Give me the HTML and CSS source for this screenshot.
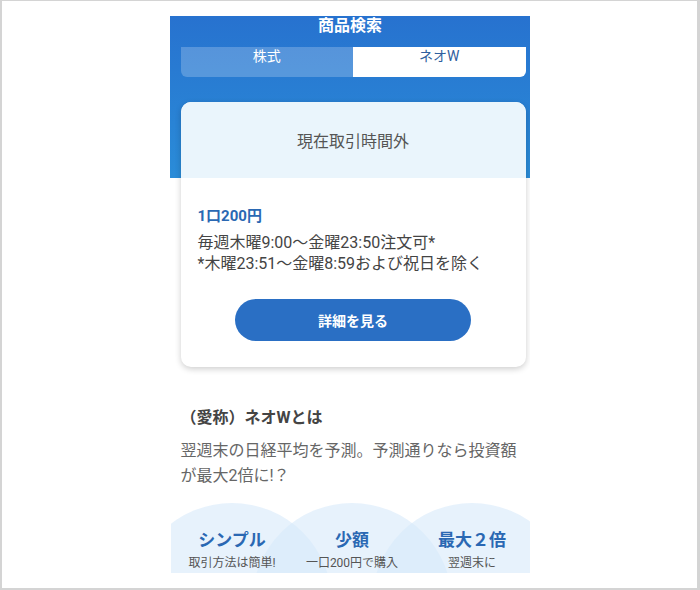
FILE: index.html
```html
<!DOCTYPE html>
<html lang="ja">
<head>
  <meta charset="UTF-8" />
  <title>商品検索 ネオW</title>
  <meta name="viewport" content="width=device-width,initial-scale=1" />
  <link rel="stylesheet" href="styles.css">
</head>
<body>
  <div class="frame">
    <div class="screen">
      <h1 class="title">商品検索</h1>
      <div class="tabs">
        <div class="tab">株式</div>
        <div class="tab active">ネオW</div>
      </div>

      <div class="card">
        <div class="card-status">現在取引時間外</div>
        <div class="card-body">
          <div class="price">1口200円</div>
          <p class="hours">毎週木曜9:00～金曜23:50注文可*<br>*木曜23:51～金曜8:59および祝日を除く</p>
          <button type="button" class="detail-btn">詳細を見る</button>
        </div>
      </div>

      <h2 class="about-title">（愛称）ネオWとは</h2>
      <p class="about-text">翌週末の日経平均を予測。予測通りなら投資額が最大2倍に!？</p>

      <div class="features">
        <div class="feature">
          <div class="feature-name">シンプル</div>
          <div class="feature-desc">取引方法は簡単!</div>
        </div>
        <div class="feature">
          <div class="feature-name">少額</div>
          <div class="feature-desc">一口200円で購入</div>
        </div>
        <div class="feature">
          <div class="feature-name">最大２倍</div>
          <div class="feature-desc">翌週末に</div>
        </div>
      </div>
    </div>
  </div>
</body>
</html>
```

FILE: styles.css
```css
:root {
  --blue: #2a6fc4;
  --blue-text: #2a68b3;
  --text: #444;
  --muted: #666;
}
body {
  margin: 0;
  background: #fff;
  font-family: Roboto, "Noto Sans CJK JP", sans-serif;
}
.frame {
  width: 700px;
  height: 590px;
  box-sizing: border-box;
  border: 2px solid #d4d4d4;
  border-top-width: 1px;
  border-right-width: 3px;
  overflow: hidden;
}
.screen {
  width: 360px;
  height: 557px;
  margin: 15px auto 0 auto;
  padding-left: 1px;
  box-sizing: border-box;
  overflow: hidden;
  background: linear-gradient(180deg, #2772cf 0%, #2a8cd8 100%) top left / 100% 162px no-repeat;
}
.title {
  margin: 0;
  color: #fff;
  font-size: 16px;
  font-weight: 700;
  line-height: 20px;
  text-align: center;
}
.tabs {
  display: flex;
  margin: 11px 4px 0 10px;
  height: 30px;
}
.tab {
  flex: 1;
  text-align: center;
  font-size: 14px;
  line-height: 18px;
  color: #fff;
  background: rgba(255, 255, 255, 0.22);
  border-radius: 0 0 0 6px;
}
.tab.active {
  background: #fff;
  color: #2f5f9e;
  border-radius: 0 0 6px 0;
}
.card {
  margin: 25px 4px 0 10px;
  background: #fff;
  border-radius: 10px;
  overflow: hidden;
  box-shadow: 0 2px 6px rgba(0, 0, 0, 0.2);
}
.card-status {
  height: 76px;
  display: flex;
  align-items: center;
  justify-content: center;
  background: #eaf5fc;
  color: #555;
  font-size: 16px;
}
.card-body {
  padding: 28px 17px 26px 17px;
  display: flex;
  flex-direction: column;
}
.price {
  color: var(--blue-text);
  font-size: 15px;
  font-weight: 700;
  line-height: 20px;
}
.hours {
  margin: 6px 0 0 0;
  color: var(--text);
  font-size: 16px;
  line-height: 21px;
}
.detail-btn {
  align-self: center;
  width: 236px;
  height: 42px;
  margin-top: 25px;
  border: none;
  border-radius: 21px;
  background: var(--blue);
  color: #fff;
  font-family: inherit;
  font-size: 14px;
  font-weight: 700;
}
.about-title {
  margin: 39px 0 0 10px;
  color: var(--text);
  font-size: 16px;
  font-weight: 700;
  line-height: 24px;
}
.about-text {
  margin: 8px 4px 0 10px;
  color: var(--muted);
  font-size: 16px;
  line-height: 25px;
}
.features {
  display: flex;
  justify-content: center;
  margin-top: 15px;
  height: 72px;
  overflow: hidden;
}
.feature {
  flex: none;
  width: 200px;
  height: 200px;
  margin: 0 -40px;
  border-radius: 50%;
  background: rgba(215, 234, 250, 0.6);
  text-align: center;
  box-sizing: border-box;
  padding-top: 25px;
  position: relative;
  left: 2px;
}
.feature-name,
.feature-desc {
  position: relative;
  z-index: 1;
}
.feature-name {
  color: var(--blue-text);
  font-size: 17px;
  font-weight: 700;
  line-height: 24px;
}
.feature-desc {
  margin-top: 3px;
  color: #555;
  font-size: 12px;
  line-height: 16px;
}
```
